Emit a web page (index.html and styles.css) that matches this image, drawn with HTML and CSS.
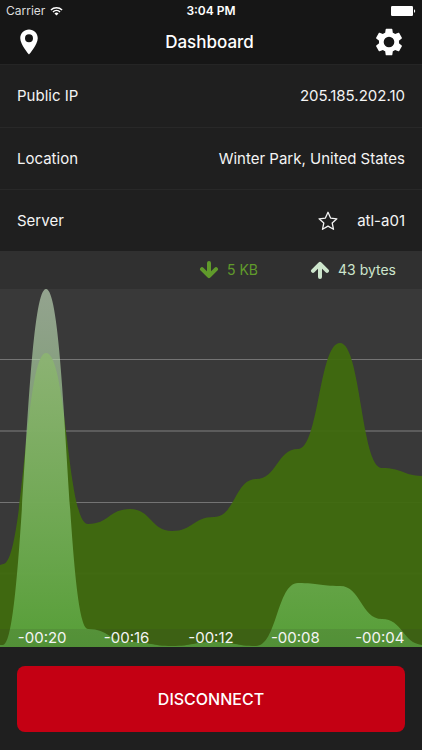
FILE: index.html
```html
<!DOCTYPE html>
<html lang="en">
<head>
<meta charset="utf-8">
<meta name="viewport" content="width=device-width, initial-scale=1">
<title>Dashboard</title>
<link rel="stylesheet" href="styles.css">
</head>
<body>
<header class="top">
  <div class="status">
    <span class="carrier">Carrier
      <svg class="wifi" viewBox="0 0 14 10" aria-hidden="true"><path d="M1 3.9a8.6 8.6 0 0 1 12 0M3.2 6.1a5.5 5.5 0 0 1 7.6 0" fill="none" stroke="currentColor" stroke-width="1.6"/><path d="M7 9.8 4.8 7.6a3.1 3.1 0 0 1 4.4 0z" fill="currentColor"/></svg>
    </span>
    <span class="clock">3:04 PM</span>
    <svg class="battery" viewBox="0 0 25 10" aria-hidden="true"><rect width="22" height="10" rx="1.2" fill="#fff"/><path d="M23 3.2c1.6.4 1.6 3.2 0 3.6z" fill="#fff"/></svg>
  </div>
  <nav class="navbar">
    <button class="icon-button" type="button" aria-label="Locations">
      <svg class="pin" viewBox="0 0 24 24"><path fill="currentColor" fill-rule="evenodd" d="M12 2C8.1 2 5 5.1 5 9c0 5.200 7 13 7 13s7-7.800 7-13c0-3.900-3.100-7-7-7zm0 10.100a3.200 3.200 0 1 1 0-6.400 3.200 3.200 0 0 1 0 6.400z"/></svg>
    </button>
    <h1 class="title">Dashboard</h1>
    <button class="icon-button settings" type="button" aria-label="Settings">
      <svg class="gear" viewBox="0 0 24 24"><path fill="currentColor" d="M19.430 12.980c.040-.320.070-.640.070-.980s-.030-.660-.070-.980l2.110-1.650c.190-.150.240-.420.120-.640l-2-3.460c-.120-.220-.390-.300-.610-.220l-2.490 1c-.520-.400-1.080-.730-1.690-.980l-.380-2.650C14.460 2.180 14.250 2 14 2h-4c-.250 0-.460.180-.490.420l-.380 2.650c-.610.250-1.170.590-1.690.980l-2.490-1c-.230-.090-.490 0-.610.220l-2 3.460c-.130.220-.070.490.120.640l2.110 1.650c-.040.320-.070.650-.070.980s.030.660.070.980l-2.110 1.650c-.190.150-.240.420-.120.640l2 3.460c.120.220.390.300.610.220l2.490-1c.520.400 1.080.730 1.690.980l.380 2.650c.030.240.240.420.490.420h4c.250 0 .460-.180.490-.420l.380-2.650c.610-.250 1.170-.590 1.690-.980l2.490 1c.230.090.490 0 .610-.220l2-3.460c.120-.220.070-.490-.120-.640l-2.110-1.650zM12 16a4 4 0 1 1 0-8 4 4 0 0 1 0 8z"/></svg>
    </button>
  </nav>
</header>
<main class="content">
  <dl class="details">
    <div class="row"><dt>Public IP</dt><dd>205.185.202.10</dd></div>
    <div class="row"><dt>Location</dt><dd>Winter Park, United States</dd></div>
    <div class="row"><dt>Server</dt><dd>
      <button class="icon-button" type="button" aria-label="Add to favourites"><svg class="star" viewBox="0 0 20 20"><path d="M10 1.300 12.600 7.100 18.900 7.800 14.200 12 15.500 18.300 10 15.100 4.500 18.300 5.800 12 1.100 7.800 7.400 7.100z" fill="none" stroke="currentColor" stroke-width="1.300" stroke-linejoin="round"/></svg></button>
      atl-a01</dd></div>
  </dl>
  <section class="traffic" aria-label="Traffic">
    <div class="legend">
      <span class="rate down"><svg class="arrow" viewBox="0 0 20 18"><path d="M10 2v13M3 8.200l7 7 7-7" fill="none" stroke="currentColor" stroke-width="4" stroke-linecap="round" stroke-linejoin="round"/></svg>5 KB</span>
      <span class="rate up"><svg class="arrow" viewBox="0 0 20 18"><path d="M10 16V3M3 9.800l7-7 7 7" fill="none" stroke="currentColor" stroke-width="4" stroke-linecap="round" stroke-linejoin="round"/></svg>43 bytes</span>
    </div>
    <div class="chart">
      <svg class="plot" viewBox="0 0 422 358" preserveAspectRatio="none" aria-hidden="true">
        <defs>
          <linearGradient id="upload" x1="0" y1="0" x2="0" y2="1">
            <stop offset="0" stop-color="#d0eac8" stop-opacity=".6"/>
            <stop offset="1" stop-color="#62b84a" stop-opacity=".68"/>
          </linearGradient>
        </defs>
        <path d="M0 70.500H422M0 213.500H422" stroke="#747474"/>
        <path d="M0 142H422M0 284.500H422" stroke="#5c5c5c" stroke-width="2"/>
        <path fill="#3f6a0e" fill-opacity=".95" d="M0 276C1 276 2 275 3 275C24 275 25 64 46 64C67 64 67 235 88 235C109 235 109 220 130 220C151 220 151 242 172 242C193 242 193 228 214 228C235 228 235 190 256 190C277 190 277 160 298 160C319 160 319 54 340 54C361 54 361 179 382 179C403 179 403 187 424 187V358H0z"/>
        <path fill="url(#upload)" d="M0 356H3C24 356 25 0 46 0C67 0 67 340 88 340C109 340 109 353 130 353C151 353 151 357 172 357C193 357 193 353 214 353C235 353 235 357 256 357C277 357 277 294 298 294C319 294 319 297 340 297C361 297 361 330 382 330C403 330 403 356 424 356V358H0z"/>
      </svg>
      <ol class="axis"><li>-00:20</li><li>-00:16</li><li>-00:12</li><li>-00:08</li><li>-00:04</li></ol>
    </div>
  </section>
</main>
<footer class="actions"><button class="disconnect" type="button">DISCONNECT</button></footer>
</body>
</html>
```
FILE: styles.css
```css
* { box-sizing: border-box; }
body {
  margin: 0;
  min-height: 100vh;
  display: flex;
  flex-direction: column;
  background: #1f1f1f;
  color: #f4f4f4;
  font: 15px/20px Inter, "Liberation Sans", sans-serif;
}
button { font: inherit; color: inherit; border: 0; padding: 0; cursor: pointer; }
svg { display: block; }
.top { background: #161616; color: #fff; border-bottom: 1px solid #252525; }
.status {
  display: grid;
  grid-template-columns: 1fr auto 1fr;
  align-items: center;
  height: 22px;
  padding: 0 6px;
  font-size: 12px;
}
.carrier { display: flex; align-items: center; gap: 5px; color: #ddd; }
.wifi { width: 13px; height: 10px; color: #fff; }
.clock { font-weight: 600; }
.battery { width: 25px; height: 10px; justify-self: end; }
.navbar {
  display: grid;
  grid-template-columns: 1fr auto 1fr;
  align-items: center;
  height: 42px;
  padding: 0 17px 2px 14px;
}
.icon-button { background: none; justify-self: start; }
.settings { justify-self: end; }
.pin { width: 30px; height: 30px; }
.gear { width: 32px; height: 32px; }
.title { margin: 0; font-size: 17px; font-weight: 500; line-height: 20px; }
.content { flex: 1; display: flex; flex-direction: column; }
.details { margin: 0; }
.row {
  display: flex;
  align-items: center;
  justify-content: space-between;
  height: 62px;
  padding: 0 17px;
}
.row + .row { border-top: 1px solid #282828; }
.row dd { margin: 0; display: flex; align-items: center; gap: 19px; }
.star { width: 20px; height: 20px; }
.traffic { flex: 1; display: flex; flex-direction: column; background: #393939; }
.legend {
  display: flex;
  align-items: center;
  justify-content: flex-end;
  gap: 52px;
  height: 38px;
  padding: 0 26px;
  background: #303030;
  font-size: 14px;
}
.rate { display: flex; align-items: center; gap: 8px; }
.arrow { width: 20px; height: 18px; }
.down { color: #609a2b; }
.up { color: #cde5cc; }
.chart { position: relative; flex: 1; min-height: 200px; }
.plot { position: absolute; inset: 0; width: 100%; height: 100%; }
.axis {
  position: absolute;
  inset: auto 0 0;
  display: grid;
  grid-template-columns: repeat(5, 1fr);
  margin: 0;
  padding: 0;
  list-style: none;
  text-align: center;
  line-height: 18px;
  background: rgba(48, 48, 48, .12);
}
.actions { padding: 19px 17px 18px; }
.disconnect {
  display: block;
  width: 100%;
  height: 66px;
  border-radius: 8px;
  background: #c40013;
  color: #fff;
  font-size: 16px;
  font-weight: 500;
}
```
